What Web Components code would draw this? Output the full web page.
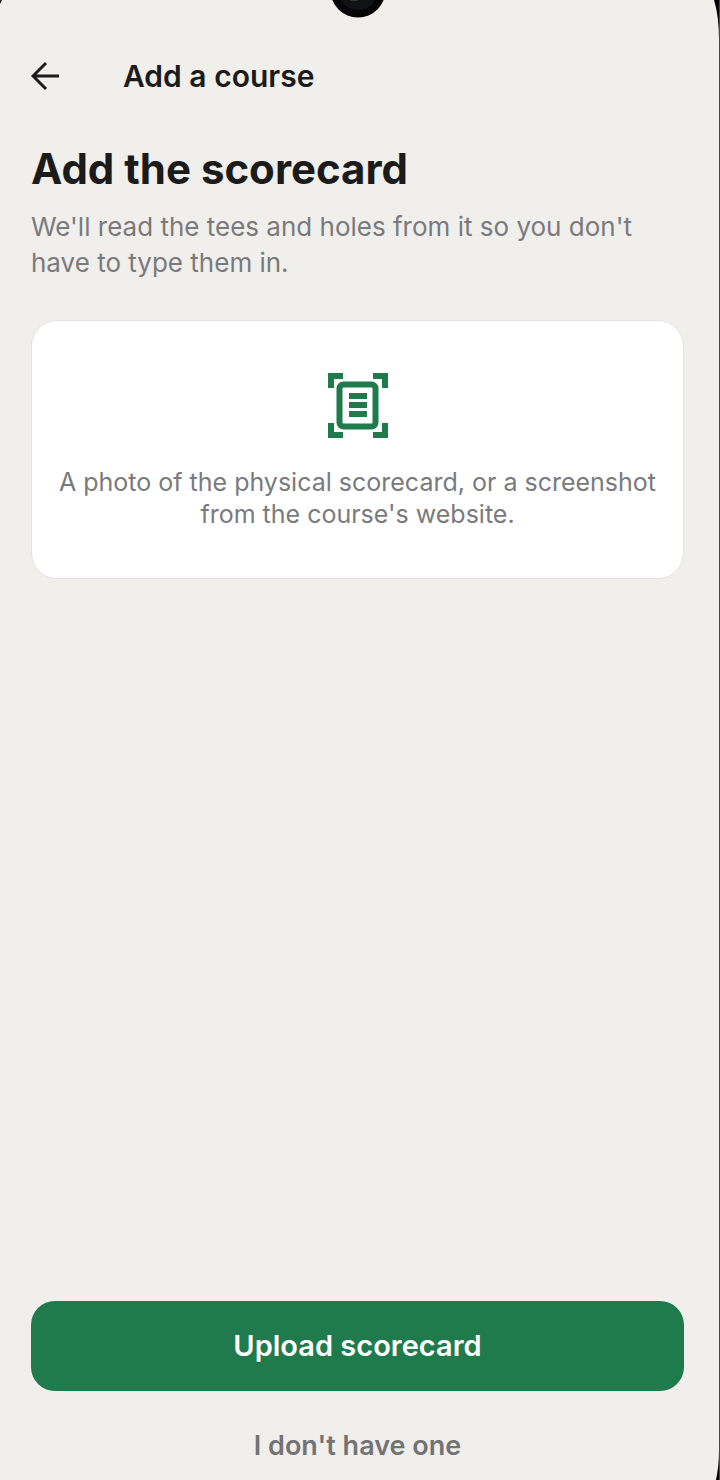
<!DOCTYPE html>
<html lang="en">
<head>
<meta charset="utf-8">
<meta name="viewport" content="width=device-width, initial-scale=1">
<title>Add a course</title>
<style>
    body {
        margin: 0;
        background: #f0efeb;
        color: #1b1b1b;
        font-family: Inter, "Liberation Sans", sans-serif;
    }
</style>
</head>
<body>
<phone-screen>
    <app-header slot="header">Add a course</app-header>
    <page-intro>
        <span slot="title">Add the scorecard</span>
        We'll read the tees and holes from it so you don't have to type them in.
    </page-intro>
    <scorecard-hint>A photo of the physical scorecard, or a screenshot from the course's website.</scorecard-hint>
    <action-button slot="footer">Upload scorecard</action-button>
    <action-button slot="footer" plain>I don't have one</action-button>
</phone-screen>

<script>
class PhoneScreen extends HTMLElement {

    constructor() {
        super()
        this.shadowDOM = this.attachShadow({mode : "open"})
    }

    connectedCallback() {
        this.shadowDOM.innerHTML = `
            <style>
            :host {
                position: relative;
                display: flex;
                flex-direction: column;
                box-sizing: border-box;
                min-height: 100vh;
                padding: 44px 35px 4px 31px;
                border-right: 1px solid #484848;
                overflow: hidden;
            }
            main {
                flex: 1;
                display: flex;
                flex-direction: column;
                gap: 39px;
            }
            footer {
                display: flex;
                flex-direction: column;
                gap: 25px;
            }
            svg {
                position: absolute;
            }
            .camera {
                top: 0;
                left: 31px;
                right: 35px;
                margin: 0 auto;
            }
            .top-left {
                top: 0;
                left: 0;
            }
            .top-right {
                top: 0;
                right: -1px;
            }
            .bottom-right {
                bottom: 0;
                right: -1px;
            }
            </style>
            <slot name="header"></slot>
            <main><slot></slot></main>
            <footer><slot name="footer"></slot></footer>
            <svg class="camera" width="56" height="18" viewBox="0 0 56 18" aria-hidden="true">
                <circle cx="28" cy="-10" r="27.5" fill="#050505"/>
                <circle cx="28" cy="-10" r="20" fill="#111215"/>
                <ellipse cx="24" cy="0" rx="4" ry="1" fill="#3a3c42"/>
            </svg>
            <svg class="top-left" width="3" height="5" viewBox="0 0 3 5" aria-hidden="true">
                <path d="M0 0H2L0 4Z" fill="#222"/>
            </svg>
            <svg class="top-right" width="7" height="40" viewBox="0 0 7 40" aria-hidden="true">
                <path d="M1 0H7V40H6Q6 16 1 0Z" fill="#000"/>
            </svg>
            <svg class="bottom-right" width="5" height="30" viewBox="0 0 5 30" aria-hidden="true">
                <path d="M4 0H5V30H1Q4 16 4 0Z" fill="#000"/>
            </svg>
        `
    }

}

class AppHeader extends HTMLElement {

    constructor() {
        super()
        this.shadowDOM = this.attachShadow({mode : "open"})
    }

    connectedCallback() {
        this.shadowDOM.innerHTML = `
            <style>
            :host {
                display: flex;
                align-items: center;
                gap: 60px;
                height: 64px;
                margin-bottom: 37px;
            }
            button {
                display: flex;
                align-items: center;
                width: 32px;
                height: 48px;
                padding: 0;
                border: 0;
                background: none;
                color: inherit;
            }
            h2 {
                margin: 0;
                font-size: 30px;
                font-weight: 600;
                line-height: 40px;
            }
            </style>
            <button type="button" aria-label="Back">
                <svg width="30" height="30" viewBox="0 0 30 30" fill="none" stroke="currentColor" stroke-width="3" aria-hidden="true">
                    <path d="M28 15H2M15 2L2 15L15 28"/>
                </svg>
            </button>
            <h2><slot></slot></h2>
        `
    }

}

class PageIntro extends HTMLElement {

    constructor() {
        super()
        this.shadowDOM = this.attachShadow({mode : "open"})
    }

    connectedCallback() {
        this.shadowDOM.innerHTML = `
            <style>
            :host {
                display: block;
            }
            h1 {
                margin: 0 0 16px;
                font-size: 42px;
                font-weight: 700;
                line-height: 48px;
            }
            p {
                margin: 0;
                color: #7a7a7c;
                font-size: 26px;
                line-height: 36px;
            }
            </style>
            <h1><slot name="title"></slot></h1>
            <p><slot></slot></p>
        `
    }

}

class ScorecardHint extends HTMLElement {

    constructor() {
        super()
        this.shadowDOM = this.attachShadow({mode : "open"})
    }

    connectedCallback() {
        this.shadowDOM.innerHTML = `
            <style>
            :host {
                display: flex;
                flex-direction: column;
                align-items: center;
                gap: 28px;
                padding: 52px 24px 48px;
                border: 1px solid #e4e3e0;
                border-radius: 26px;
                background: #fff;
            }
            p {
                margin: 0;
                color: #7a7a7c;
                font-size: 25px;
                line-height: 32px;
                text-align: center;
            }
            </style>
            <svg width="60" height="65" viewBox="0 0 60 65" fill="none" stroke="#1f7a4c" aria-hidden="true">
                <path d="M15 3H3V15M45 3H57V15M3 50V62H15M57 50V62H45" stroke-width="6"/>
                <rect x="11.5" y="11.5" width="36" height="42" rx="4" stroke-width="6"/>
                <path d="M21 23H39M21 32H39M21 41H39" stroke-width="6"/>
            </svg>
            <p><slot></slot></p>
        `
    }

}

class ActionButton extends HTMLElement {

    constructor() {
        super()
        this.shadowDOM = this.attachShadow({mode : "open"})
    }

    connectedCallback() {
        this.shadowDOM.innerHTML = `
            <style>
            :host {
                display: block;
            }
            button {
                display: block;
                width: 100%;
                padding: 25px 16px;
                border: 0;
                border-radius: 24px;
                background: #1f7a4c;
                color: #fff;
                font-family: inherit;
                font-size: 29px;
                font-weight: 600;
                line-height: 40px;
            }
            :host([plain]) button {
                padding: 10px 16px;
                background: none;
                color: #737375;
                font-size: 27px;
            }
            </style>
            <button type="button"><slot></slot></button>
        `
    }

}

customElements.define("phone-screen", PhoneScreen)
customElements.define("app-header", AppHeader)
customElements.define("page-intro", PageIntro)
customElements.define("scorecard-hint", ScorecardHint)
customElements.define("action-button", ActionButton)
</script>
</body>
</html>
